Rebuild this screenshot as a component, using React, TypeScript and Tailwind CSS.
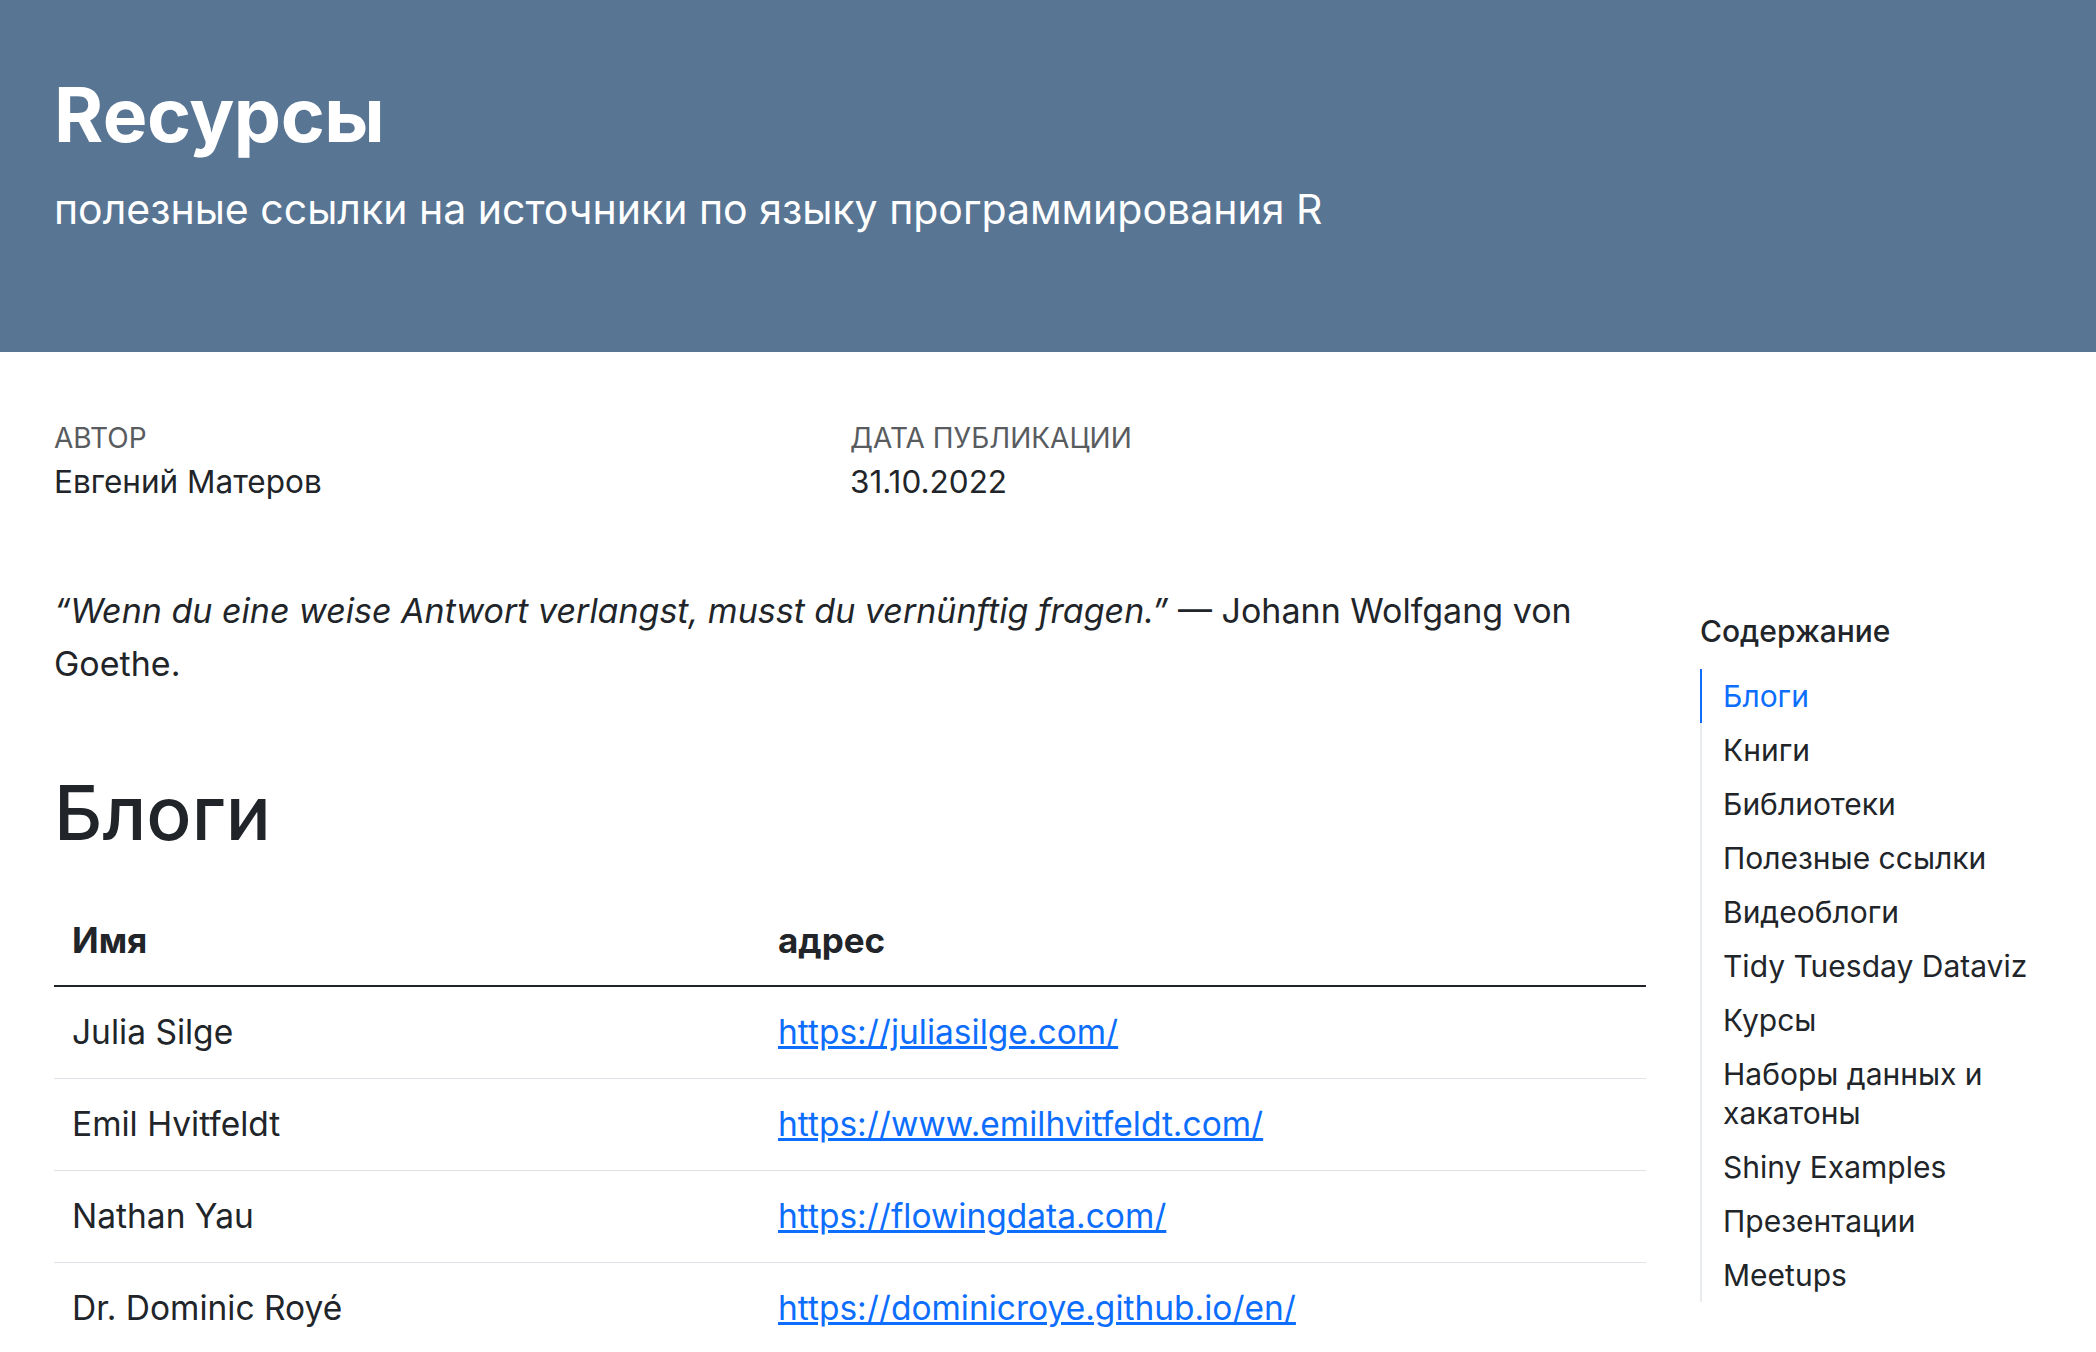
const toc = [
  'Блоги',
  'Книги',
  'Библиотеки',
  'Полезные ссылки',
  'Видеоблоги',
  'Tidy Tuesday Dataviz',
  'Курсы',
  'Наборы данных и хакатоны',
  'Shiny Examples',
  'Презентации',
  'Meetups',
];

const blogs = [
  { name: 'Julia Silge', url: 'https://juliasilge.com/' },
  { name: 'Emil Hvitfeldt', url: 'https://www.emilhvitfeldt.com/' },
  { name: 'Nathan Yau', url: 'https://flowingdata.com/' },
  { name: 'Dr. Dominic Royé', url: 'https://dominicroye.github.io/en/' },
];

export default function App() {
  return (
    <div className="min-h-screen bg-white text-[#212529] font-['Inter',sans-serif]">
      {/* Title banner */}
      <header className="h-[352px] bg-[#587594] px-[54px] pt-[68px] text-white">
        <h1 className="text-[75px] font-bold leading-[94px] tracking-[-0.5px]">Rесурсы</h1>
        <p className="mt-[20px] text-[41px] leading-[54px]">
          полезные ссылки на источники по языку программирования R
        </p>
      </header>

      {/* Meta */}
      <div className="box-content grid w-[1592px] grid-cols-2 px-[54px] pt-[67px]">
        <div>
          <div className="text-[28px] leading-[39px] uppercase text-[#595c5f]">Автор</div>
          <div className="text-[31.5px] leading-[47px]">Евгений Матеров</div>
        </div>
        <div>
          <div className="text-[28px] leading-[39px] uppercase text-[#595c5f]">Дата публикации</div>
          <div className="text-[31.5px] leading-[47px]">31.10.2022</div>
        </div>
      </div>

      <div className="mt-[79px] flex gap-[54px] pl-[54px]">
        {/* Main column */}
        <main className="w-[1592px] shrink-0">
          <p className="text-[34px] leading-[53px]">
            <em>“Wenn du eine weise Antwort verlangst, musst du vernünftig fragen.”</em> — Johann Wolfgang von
            Goethe.
          </p>

          <h2 className="mt-[76px] text-[75px] font-medium leading-[94px]">Блоги</h2>

          <table className="mt-[36px] w-full border-collapse text-left text-[33.5px] leading-[47px]">
            <thead>
              <tr className="border-b-2 border-[#212529]">
                <th className="w-[706px] px-[18px] py-[21px] text-[35px] font-bold">Имя</th>
                <th className="px-[18px] py-[21px] text-[35px] font-bold">адрес</th>
              </tr>
            </thead>
            <tbody>
              {blogs.map(b => (
                <tr key={b.name} className="border-b border-[#dee2e6]">
                  <td className="px-[18px] py-[22px]">{b.name}</td>
                  <td className="px-[18px] py-[22px]">
                    <a href={b.url} className="text-[#0d6efd] underline">
                      {b.url}
                    </a>
                  </td>
                </tr>
              ))}
            </tbody>
          </table>
        </main>

        {/* Table of contents */}
        <nav className="w-[360px] shrink-0 pt-[27px]">
          <div className="mb-[18px] text-[30px] font-medium leading-[40px]">Содержание</div>
          <ul className="border-l-2 border-[#e9ecef]">
            {toc.map((t, i) => (
              <li
                key={t}
                className={
                  i === 0
                    ? '-ml-[2px] border-l-2 border-[#0d6efd] py-[7.5px] pl-[21px] pr-[30px] text-[30px] leading-[39px] text-[#0d6efd]'
                    : 'py-[7.5px] pl-[21px] pr-[30px] text-[30px] leading-[39px]'
                }
              >
                {t}
              </li>
            ))}
          </ul>
        </nav>
      </div>
    </div>
  );
}
